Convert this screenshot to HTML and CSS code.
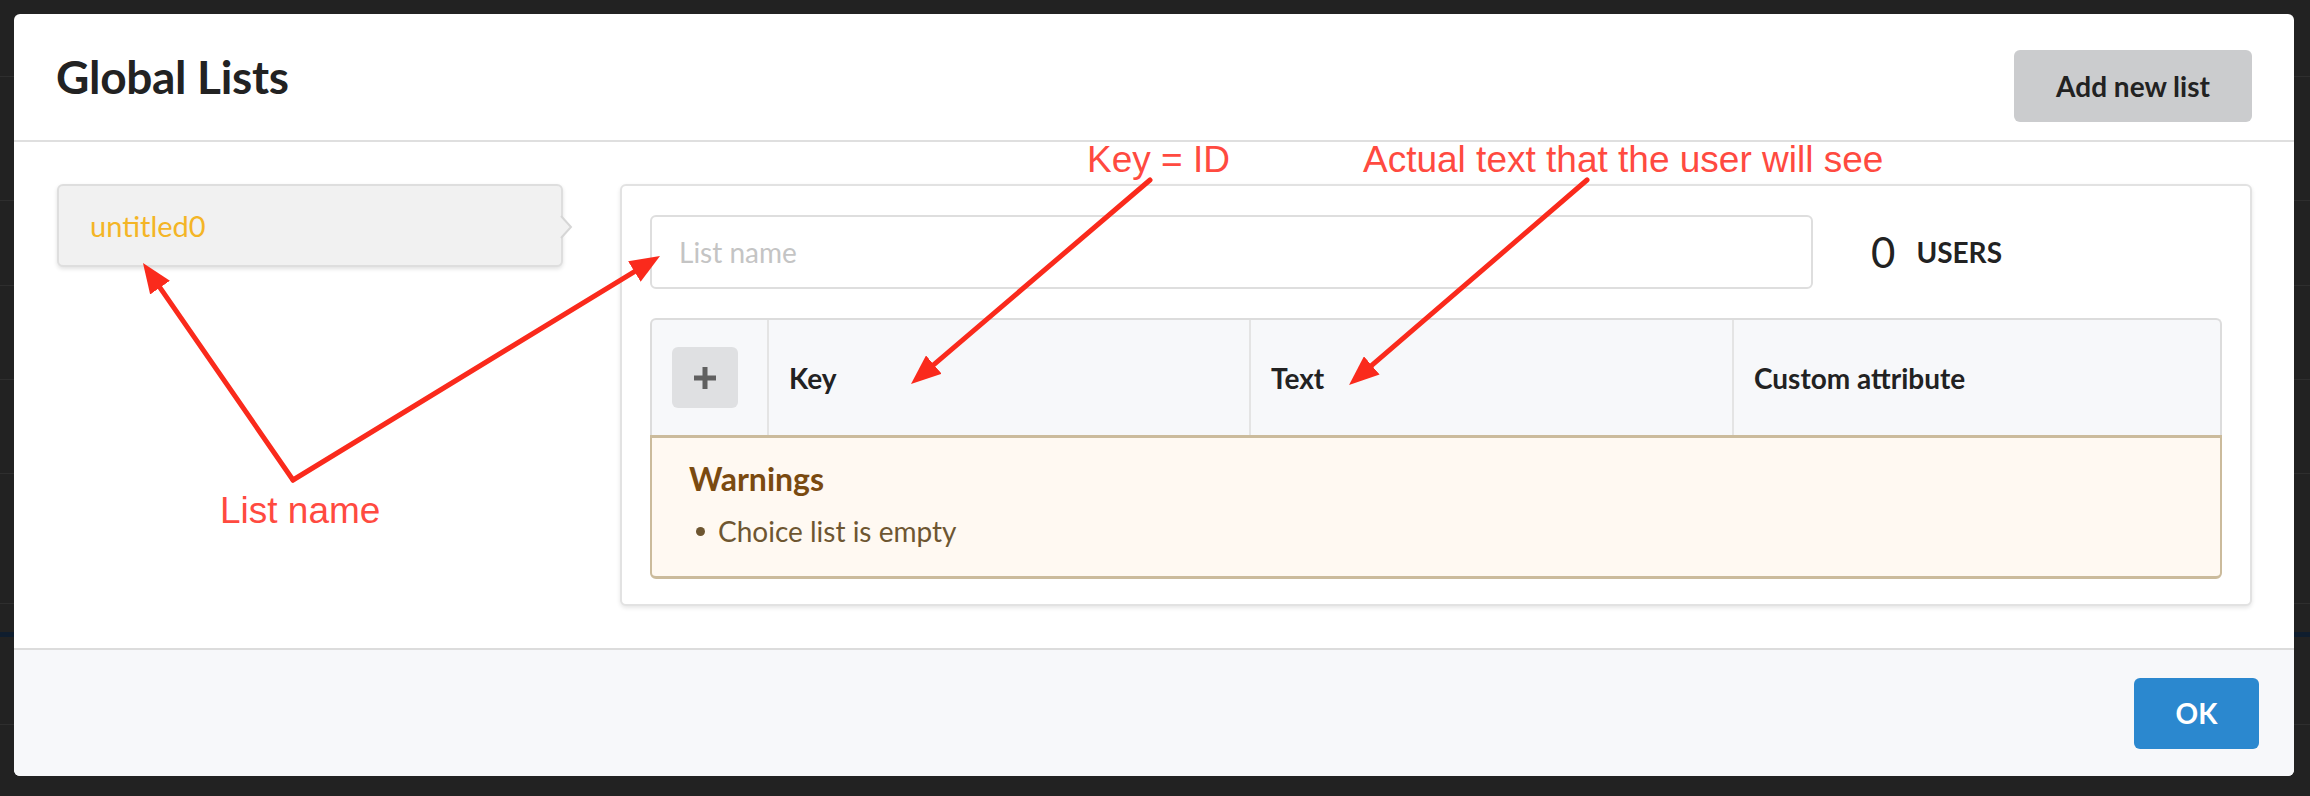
FILE: index.html
```html
<!DOCTYPE html>
<html lang="en">
<head>
<meta charset="utf-8">
<title>Global Lists</title>
<link rel="stylesheet" href="styles.css">
</head>
<body>
<div class="modal">
  <header class="modal-header">
    <h1 class="modal-title">Global Lists</h1>
    <button class="btn-add" type="button">Add new list</button>
  </header>
  <div class="modal-body">
    <aside class="lists">
      <div class="list-item">
        <span class="list-item-name">untitled0</span>
        <svg class="chevron" width="14" height="24" viewBox="0 0 14 24"><polyline points="1,1 11,12 1,23" fill="#f1f1f1" stroke="#d6d6d6" stroke-width="2"/></svg>
      </div>
    </aside>
    <section class="panel">
      <div class="panel-top">
        <input class="list-name-input" type="text" placeholder="List name">
        <div class="users">
          <span class="users-count">0</span>
          <span class="users-label">USERS</span>
        </div>
      </div>
      <div class="choices">
        <div class="choices-head">
          <div class="cell cell-add">
            <button class="btn-plus" type="button" aria-label="Add">
              <svg width="22" height="22" viewBox="0 0 22 22"><rect x="8.5" y="0" width="5" height="22" fill="#606060"/><rect x="0" y="8.5" width="22" height="5" fill="#606060"/></svg>
            </button>
          </div>
          <div class="cell">Key</div>
          <div class="cell">Text</div>
          <div class="cell">Custom attribute</div>
        </div>
        <div class="warnings">
          <h3 class="warnings-title">Warnings</h3>
          <ul class="warnings-list">
            <li>Choice list is empty</li>
          </ul>
        </div>
      </div>
    </section>
  </div>
  <footer class="modal-footer">
    <button class="btn-ok" type="button">OK</button>
  </footer>
</div>

<svg class="annot-arrows" width="2310" height="796" viewBox="0 0 2310 796">
  <defs>
    <marker id="head" markerUnits="userSpaceOnUse" markerWidth="30" markerHeight="24" refX="15" refY="12" orient="auto">
      <path d="M0,0 L30,12 L0,24 Z" fill="#fa2a1c"/>
    </marker>
  </defs>
  <g stroke="#fa2a1c" stroke-width="5" fill="none" stroke-linecap="round">
    <line x1="293" y1="480" x2="151.5" y2="275.3" marker-end="url(#head)"/>
    <line x1="293" y1="480" x2="647.2" y2="263.8" marker-end="url(#head)"/>
    <line x1="1150" y1="180" x2="922.4" y2="374.3" marker-end="url(#head)"/>
    <line x1="1587" y1="180" x2="1360.4" y2="375.2" marker-end="url(#head)"/>
  </g>
</svg>
<div class="annot annot-key">Key = ID</div>
<div class="annot annot-text">Actual text that the user will see</div>
<div class="annot annot-list">List name</div>
</body>
</html>
```

FILE: styles.css
```css
* { box-sizing: border-box; }

html, body {
  margin: 0;
  padding: 0;
}

body {
  width: 2310px;
  height: 796px;
  padding: 14px 16px 20px 14px;
  background-color: #222222;
  background-image:
    linear-gradient(#2e2e2e, #2e2e2e),
    linear-gradient(#2e2e2e, #2e2e2e),
    linear-gradient(#2e2e2e, #2e2e2e),
    linear-gradient(#2e2e2e, #2e2e2e),
    linear-gradient(#2e2e2e, #2e2e2e),
    linear-gradient(#2e2e2e, #2e2e2e),
    linear-gradient(#0f1d2e, #0f1d2e),
    linear-gradient(#2e2e2e, #2e2e2e);
  background-size: 100% 1px, 100% 1px, 100% 1px, 100% 1px, 100% 1px, 100% 1px, 100% 5px, 100% 1px;
  background-position: 0 76px, 0 200px, 0 285px, 0 379px, 0 473px, 0 603px, 0 632px, 0 724px;
  background-repeat: no-repeat;
  font-family: Lato, "Open Sans", "Liberation Sans", sans-serif;
  color: #222222;
  position: relative;
  overflow: hidden;
}

.modal {
  width: 2280px;
  height: 762px;
  background: #ffffff;
  border-radius: 6px;
  display: flex;
  flex-direction: column;
  overflow: hidden;
}

/* header */
.modal-header {
  height: 128px;
  flex: 0 0 128px;
  padding: 35px 42px 0 42px;
  display: flex;
  justify-content: space-between;
  align-items: flex-start;
  border-bottom: 2px solid #dfdfdf;
}

.modal-title {
  margin: 0;
  font-size: 46px;
  line-height: 55px;
  font-weight: 700;
  color: #222222;
  letter-spacing: -0.3px;
}

.btn-add {
  margin-top: 1px;
  width: 238px;
  height: 72px;
  border: none;
  border-radius: 6px;
  background: #cbccce;
  color: #222222;
  font-family: Lato, "Liberation Sans", sans-serif;
  font-size: 28px;
  font-weight: 700;
  padding: 0;
}

/* body */
.modal-body {
  flex: 1 1 auto;
  display: flex;
  align-items: flex-start;
  gap: 57px;
  padding: 42px 42px 41px 43px;
}

.lists {
  flex: 0 0 506px;
}

.list-item {
  position: relative;
  height: 83px;
  border: 2px solid #dedede;
  border-radius: 6px;
  background: #f1f1f1;
  box-shadow: 0 2px 4px rgba(0, 0, 0, 0.12);
  display: flex;
  align-items: center;
  padding-left: 31px;
}

.list-item-name {
  font-size: 29px;
  line-height: 34px;
  color: #f4b526;
}

.chevron {
  position: absolute;
  right: -13px;
  top: 29px;
}

.panel {
  flex: 1 1 auto;
  border: 2px solid #e2e2e2;
  border-radius: 6px;
  background: #ffffff;
  box-shadow: 0 2px 4px rgba(0, 0, 0, 0.10);
  padding: 29px 28px 25px 28px;
}

.panel-top {
  display: flex;
  align-items: center;
  margin-bottom: 29px;
}

.list-name-input {
  flex: 1 1 auto;
  height: 74px;
  border: 2px solid #dedede;
  border-radius: 6px;
  padding: 0 0 0 27px;
  font-family: Lato, "Liberation Sans", sans-serif;
  font-size: 28px;
  color: #222222;
  outline: none;
  background: #ffffff;
}

.list-name-input::placeholder {
  color: #c4c4c4;
}

.users {
  flex: 0 0 409px;
  padding-left: 58px;
  display: flex;
  align-items: center;
  gap: 21px;
}

.users-count {
  font-size: 42px;
  line-height: 48px;
  font-weight: 400;
  color: #222222;
}

.users-label {
  font-size: 28px;
  line-height: 34px;
  font-weight: 700;
  color: #222222;
}

/* choices table */
.choices-head {
  display: grid;
  grid-template-columns: 115px 482px 483px 1fr;
  height: 117px;
  border: 2px solid #dcdcdc;
  border-bottom: none;
  border-radius: 6px 6px 0 0;
  background: #f7f8fa;
}

.cell {
  display: flex;
  align-items: center;
  padding-left: 20px;
  font-size: 28px;
  font-weight: 700;
  color: #222222;
  border-left: 2px solid #e4e4e4;
}

.cell.cell-add {
  border-left: none;
  padding-left: 20px;
}

.btn-plus {
  width: 66px;
  height: 61px;
  border: none;
  border-radius: 6px;
  background: #dfe0e2;
  display: flex;
  align-items: center;
  justify-content: center;
  padding: 0;
}

.warnings {
  height: 144px;
  background: #fff9f2;
  border: 2px solid #cbbb9c;
  border-top-width: 3px;
  border-bottom-width: 3px;
  border-radius: 0 0 6px 6px;
  padding: 22px 37px 0 37px;
}

.warnings-title {
  margin: 0 0 16px 0;
  font-size: 32px;
  line-height: 38px;
  font-weight: 700;
  color: #7a4a10;
}

.warnings-list {
  list-style: none;
  margin: 0;
  padding: 0 0 0 7px;
}

.warnings-list li {
  display: flex;
  align-items: center;
  font-size: 28px;
  line-height: 34px;
  color: #6e5631;
}

.warnings-list li::before {
  content: "";
  width: 9px;
  height: 9px;
  border-radius: 50%;
  background: #6e5631;
  margin-right: 13px;
  flex: 0 0 9px;
}

/* footer */
.modal-footer {
  flex: 0 0 128px;
  height: 128px;
  border-top: 2px solid #dcdcdc;
  background: #f7f8fa;
  display: flex;
  justify-content: flex-end;
  align-items: center;
  padding: 0 35px 0 0;
}

.btn-ok {
  width: 125px;
  height: 71px;
  border: none;
  border-radius: 6px;
  background: #2b88cf;
  color: #ffffff;
  font-family: Lato, "Liberation Sans", sans-serif;
  font-size: 28px;
  font-weight: 700;
  padding: 0;
}

/* annotations (overlay) */
.annot-arrows {
  position: absolute;
  left: 0;
  top: 0;
  pointer-events: none;
}

.annot {
  position: absolute;
  font-family: "Liberation Sans", Arial, sans-serif;
  font-size: 37px;
  line-height: 37px;
  color: #ff4a40;
  white-space: nowrap;
}

.annot-key {
  left: 1087px;
  top: 141px;
}

.annot-text {
  left: 1363px;
  top: 141px;
}

.annot-list {
  left: 220px;
  top: 492px;
}
```
